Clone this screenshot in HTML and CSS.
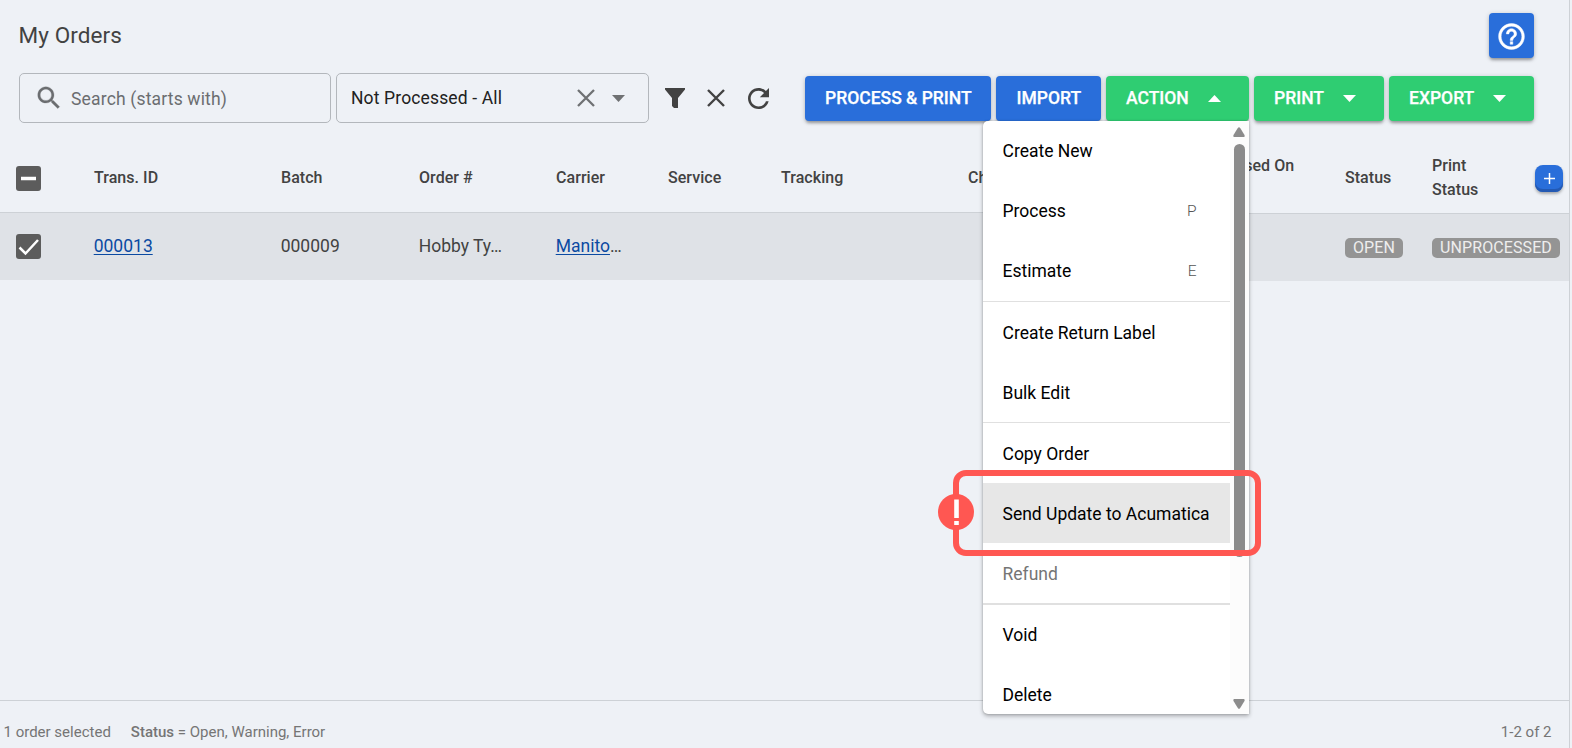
FILE: index.html
```
<!DOCTYPE html>
<html lang="en">
<head>
<meta charset="utf-8">
<title>My Orders</title>
<link rel="stylesheet" href="styles.css">
</head>
<body>
<div class="app">
  <header class="topbar">
    <h1 class="title">My Orders</h1>
    <button class="btn help" aria-label="Help"><svg viewBox="0 0 24 24" width="31" height="31" fill="#fff" stroke="#fff" stroke-width=".35"><path d="M11 18h2v-2h-2v2zm1-16C6.480 2 2 6.480 2 12s4.480 10 10 10 10-4.480 10-10S17.520 2 12 2zm0 18c-4.410 0-8-3.590-8-8s3.590-8 8-8 8 3.590 8 8-3.590 8-8 8zm0-14c-2.210 0-4 1.790-4 4h2c0-1.100.9-2 2-2s2 .9 2 2c0 2-3 1.750-3 5h2c0-2.250 3-2.500 3-5 0-2.210-1.790-4-4-4z"/></svg></button>
  </header>
  <div class="toolbar">
    <div class="field search">
      <svg viewBox="0 0 24 24" width="30" height="30" fill="#6b6d70" stroke="#6b6d70" stroke-width=".2"><path d="M15.500 14h-.79l-.28-.27C15.410 12.590 16 11.110 16 9.500 16 5.910 13.090 3 9.500 3S3 5.910 3 9.500 5.910 16 9.500 16c1.610 0 3.090-.59 4.230-1.570l.27.28v.79l5 4.990L20.490 19l-4.990-5zm-6 0C7.010 14 5 11.990 5 9.500S7.010 5 9.500 5 14 7.010 14 9.500 11.990 14 9.500 14z"/></svg>
      <span class="placeholder">Search (starts with)</span>
    </div>
    <div class="field select">
      <span class="value">Not Processed - All</span>
      <svg viewBox="0 0 18 18" width="18" height="18" stroke="#6f7173" stroke-width="2.300"><path d="M1 1l16 16M17 1L1 17"/></svg>
      <svg class="caret" viewBox="0 0 13 7" width="13" height="7" fill="#6f7173"><path d="M0 0h13L6.500 7z"/></svg>
    </div>
    <div class="tools">
      <svg viewBox="0 0 20 20" width="20" height="20" fill="#424242"><path d="M0 0h20v1.500L13 10v10H9L7 18V10L0 1.500z"/></svg>
      <svg class="clear" viewBox="0 0 18 18" width="18" height="18" stroke="#424242" stroke-width="2.400"><path d="M1 1l16 16M17 1L1 17"/></svg>
      <svg viewBox="4 4 16 16" width="21" height="21" fill="#424242"><path d="M17.650 6.350C16.200 4.900 14.210 4 12 4c-4.420 0-7.990 3.580-7.990 8s3.570 8 7.990 8c3.730 0 6.840-2.550 7.730-6h-2.080c-.82 2.330-3.040 4-5.650 4-3.310 0-6-2.690-6-6s2.690-6 6-6c1.660 0 3.140.69 4.220 1.780L13 11h7V4l-2.350 2.350z"/></svg>
    </div>
    <div class="actions">
      <button class="btn w-pp">PROCESS &amp; PRINT</button>
      <button class="btn w-import">IMPORT</button>
      <button class="btn green w-action">ACTION<svg viewBox="0 0 13 7" width="13" height="7" fill="#fff"><path d="M0 7h13L6.500 0z"/></svg></button>
      <button class="btn green w-print">PRINT<svg viewBox="0 0 13 7" width="13" height="7" fill="#fff"><path d="M0 0h13L6.500 7z"/></svg></button>
      <button class="btn green w-export">EXPORT<svg viewBox="0 0 13 7" width="13" height="7" fill="#fff"><path d="M0 0h13L6.500 7z"/></svg></button>
    </div>
  </div>
  <div class="grid head">
    <div><span class="check"><svg viewBox="0 0 25 25" width="25" height="25"><path d="M5 12.500h15" stroke="#fff" stroke-width="3.500"/></svg></span></div>
    <div>Trans. ID</div><div>Batch</div><div>Order #</div><div>Carrier</div><div>Service</div><div>Tracking</div><div>Charge</div>
    <div class="on">Processed On</div><div>Status</div><div>Print<br>Status</div>
    <div class="plus"><button class="add" aria-label="Add column"><svg viewBox="0 0 11 11" width="11" height="11" stroke="#fff" stroke-width="1.500"><path d="M5.500 0v11M0 5.500h11"/></svg></button></div>
  </div>
  <div class="grid row">
    <div><span class="check"><svg viewBox="0 0 25 25" width="25" height="25"><path d="M3.500 13.500l6 6L22 6" fill="none" stroke="#fff" stroke-width="2.500"/></svg></span></div>
    <div class="cell"><a class="link">000013</a></div><div class="cell">000009</div><div class="cell">Hobby Ty…</div><div class="cell"><a class="link">Manito</a>…</div><div></div><div></div><div></div><div></div>
    <div class="tag"><span class="badge">OPEN</span></div><div class="tag"><span class="badge">UNPROCESSED</span></div>
  </div>
  <main class="empty"></main>
  <footer class="footer"><span class="sel">1 order selected</span><span><b>Status</b> = Open, Warning, Error</span><span class="pages">1-2 of 2</span></footer>
</div>
<div class="menu">
  <div class="items">
    <div class="item">Create New</div>
    <div class="item">Process<kbd>P</kbd></div>
    <div class="item">Estimate<kbd>E</kbd></div>
    <div class="line"></div>
    <div class="item low">Create Return Label</div>
    <div class="item low">Bulk Edit</div>
    <div class="line"></div>
    <div class="item low">Copy Order</div>
    <div class="item low active">Send Update to Acumatica</div>
    <div class="item low off">Refund</div>
    <div class="line thick"></div>
    <div class="item">Void</div>
    <div class="item">Delete</div>
  </div>
  <div class="scroll">
    <svg viewBox="0 0 12 10" width="12" height="10" fill="#8b8b8b"><path d="M1 10Q0 9.500.5 8L4.800 1Q6-.7 7.200 1L11.500 8Q12 9.500 11 10z"/></svg>
    <div class="thumb"></div>
    <svg class="down" viewBox="0 0 12 10" width="12" height="10" fill="#8b8b8b"><path d="M1 0Q0 .5.5 2L4.800 9Q6 10.700 7.200 9L11.500 2Q12 .5 11 0z"/></svg>
  </div>
</div>
<div class="callout"></div>
<svg class="alert" viewBox="0 0 36 36" width="36" height="36"><circle cx="18" cy="18" r="18" fill="#ff5752"/><path d="M18.500 5.500v18.500M18.500 27v4" stroke="#fff" stroke-width="4.600"/></svg>
</body>
</html>
```
FILE: styles.css
```
* { box-sizing: border-box; }
body { margin: 0; width: 1572px; height: 748px; overflow: hidden; position: relative; background: #eef1f6; font-family: Roboto, sans-serif; font-size: 17.5px; color: #424242; }
svg { flex: none; display: block; }
.app { width: 1570px; height: 748px; border-right: 1px solid #cdd1d6; display: flex; flex-direction: column; }
.topbar { height: 73px; padding: 13px 35px 0 18.5px; display: flex; justify-content: space-between; }
.title { margin: 0; font-size: 22.500px; font-weight: 400; line-height: 44px; letter-spacing: .1px; }
.btn { height: 45px; border: 0; border-radius: 4px; padding: 0 0 0 20px; background: #296eda; color: #fff; font: 500 17.500px/45px Roboto, sans-serif; display: flex; align-items: center; text-align: left; white-space: nowrap; box-shadow: 0 3px 3px -1px rgba(0,0,0,.28), 0 1px 5px rgba(0,0,0,.2); -webkit-text-stroke: .25px #fff; }
.green { background: #2fcd72; }
.btn svg { margin: -1px 0 0 19px; }
.help { width: 45px; padding: 1px 0 0; justify-content: center; }
.btn.help svg { margin: 0; }
.toolbar { height: 50px; padding-left: 19px; display: flex; }
.field { width: 312px; height: 50px; border: 1px solid #b3b7bc; border-radius: 5px; display: flex; align-items: center; }
.search { padding-left: 13.5px; }
.placeholder { margin-left: 7.5px; padding-top: 2px; color: #6b6d70; letter-spacing: .17px; }
.select { margin-left: 5px; width: 313px; padding-left: 14px; color: #212121; }
.value { width: 226px; letter-spacing: .14px; }
.caret { margin-left: 17px; }
.tools { display: flex; align-items: center; margin-left: 15.5px; width: 140.5px; }
.clear { margin: 0 22.5px 0 22.5px; }
.actions { display: flex; gap: 5px; padding-top: 3px; }
.w-pp { width: 186px; }
.w-import { width: 105px; padding-left: 20.5px; }
.w-action { width: 143px; }
.w-print { width: 130px; }
.w-export { width: 145px; }
.grid { display: grid; grid-template-columns: 78px 187px 138px 137px 112px 113px 187px 226px 151px 87px 103px 34px; padding-left: 16px; align-items: center; white-space: nowrap; }
.head { height: 90px; padding-top: 20px; font-size: 16px; font-weight: 500; line-height: 24px; letter-spacing: .05px; border-bottom: 1px solid #cdd1d6; }
.head .check { margin-top: 2px; }
.on { padding-bottom: 24px; }
.row { position: relative; height: 67px; background: #dfe2e7; }
.row::before, .row::after { content: ""; position: absolute; left: 1116px; right: 0; height: 1px; }
.row::before { top: 0; background: #cdd1d6; box-shadow: 0 -1px 0 #eef1f6; }
.row::after { top: 100%; background: #dfe2e7; }
.cell { padding-bottom: 2px; margin-left: -.3px; }
.check { display: block; width: 25px; height: 25px; border-radius: 3px; background: #5c5c5c; }
.link { color: #0b4aa2; text-decoration: underline; text-underline-offset: 2px; }
.tag { padding-top: 2px; }
.badge { display: inline-block; height: 20px; padding: 0 8px; border-radius: 5px; background: #949494; color: #eee; font-size: 16px; line-height: 19px; letter-spacing: .1px; }
.plus { padding-top: 2px; }
.add { width: 28px; height: 27px; border: 0; border-radius: 8px; background: #296eda; box-shadow: inset 0 -3px 0 #2359b3, 0 2px 3px rgba(0,0,0,.3); padding: 0; display: flex; align-items: center; justify-content: center; }
.empty { flex: 1; }
.footer { height: 48px; border-top: 1px solid #cdd1d6; display: flex; padding: 16px 17.5px 0 3.5px; font-size: 15px; line-height: 30px; color: #757575; }
.footer b { font-weight: 500; }
.sel { margin-right: 20px; }
.pages { margin-left: auto; }
.menu { position: absolute; left: 983px; top: 121px; width: 266px; height: 593px; display: flex; background: #fff; border-radius: 5px 0 0 5px; overflow: hidden; box-shadow: 0 2px 4px rgba(0,0,0,.3), 0 0 2px rgba(0,0,0,.2); }
.items { width: 247px; color: #000; }
.item { height: 60px; padding: 0 33.5px 0 19.5px; line-height: 60px; display: flex; justify-content: space-between; white-space: nowrap; }
.low { line-height: 62px; }
.item kbd { font: 300 15.5px/60px Roboto, sans-serif; color: #555; }
.active { background: #e7e7e7; }
.off { color: #757575; }
.line { height: 1px; background: #e0e0e0; }
.thick { height: 2px; }
.scroll { width: 19px; background: #fcfcfc; padding: 6px 4px 5px 3px; display: flex; flex-direction: column; align-items: center; }
.thumb { width: 11px; height: 413px; margin-top: 7px; border-radius: 6px; background: #8b8b8b; }
.down { margin-top: auto; }
.callout { position: absolute; left: 953px; top: 470px; width: 308px; height: 86px; border: 6px solid #ff5752; border-radius: 13px; }
.alert { position: absolute; left: 938px; top: 494px; }
```
